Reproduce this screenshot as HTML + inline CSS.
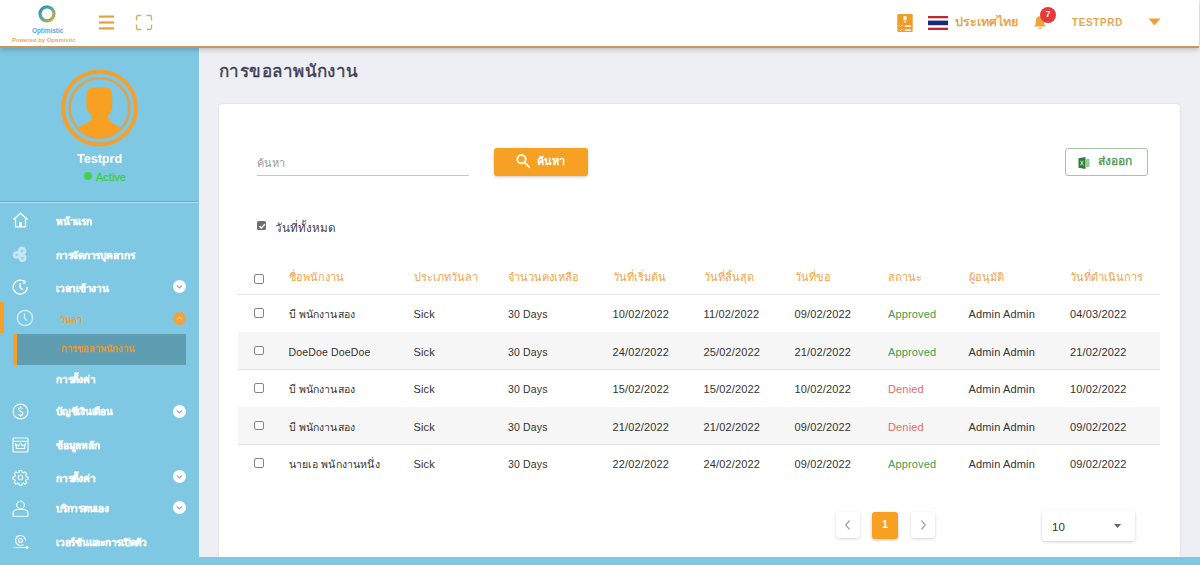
<!DOCTYPE html>
<html><head><meta charset="utf-8">
<style>
*{box-sizing:border-box;margin:0;padding:0}
html,body{width:1200px;height:565px;overflow:hidden}
body{position:relative;background:#eeeff5;font-family:"Liberation Sans",sans-serif;color:#333}
.abs{position:absolute}
#hdr{left:0;top:0;width:1199px;height:47.5px;background:#fff;border-bottom:2px solid #c9955a;box-shadow:0 2px 5px rgba(0,0,0,.2);z-index:5}
#side{left:0;top:47px;width:199px;height:518px;background:#7ec8e3;z-index:3;box-shadow:1px 0 0 #f2f8fb}
#foot{left:0;top:557px;width:1200px;height:8px;background:#7ec8e3;z-index:4}
#card{left:219px;top:104px;width:961px;height:460px;background:#fff;border-radius:4px;box-shadow:0 0 2px rgba(0,0,0,.12)}
.t{position:absolute;white-space:nowrap;line-height:1}
.mi{position:absolute;left:56px;color:#fff;font-weight:bold;font-size:10px;letter-spacing:-0.25px;-webkit-text-stroke:0.2px #fff;white-space:nowrap;line-height:1}
.ic{position:absolute;left:12px}
.chev{position:absolute;left:173px;width:13px;height:13px;border-radius:50%;background:#fff}
.chev svg{position:absolute;left:0;top:0}
.th{position:absolute;top:272px;color:#eea548;font-size:11px;line-height:1;white-space:nowrap}
.row{position:absolute;left:19px;width:922px;height:38px;border-bottom:1px solid #e6e6e6}
.row.g{background:#f5f5f5}
.cb{position:absolute;width:9.5px;height:9.5px;border:1.5px solid #858585;border-radius:2px;background:#fff}
.td{position:absolute;font-size:11px;color:#333;line-height:1;white-space:nowrap;letter-spacing:0.15px}
</style></head>
<body>
<!-- header -->
<div id="hdr" class="abs">
  <svg class="abs" style="left:37px;top:4px" width="20" height="20" viewBox="0 0 20 20">
    <defs><linearGradient id="lg" x1="0" y1="0" x2="1" y2="1"><stop offset="0" stop-color="#2e8fb0"/><stop offset=".45" stop-color="#4fa9a0"/><stop offset="1" stop-color="#e8a33a"/></linearGradient></defs>
    <circle cx="10" cy="9.8" r="7" fill="none" stroke="url(#lg)" stroke-width="3.2"/>
  </svg>
  <div class="t" style="left:32px;top:27.5px;font-size:6.4px;font-weight:bold;color:#52a8da">Optimistic</div>
  <div class="t" style="left:12px;top:37.5px;font-size:5.9px;font-weight:bold;color:#e0ad6c">Powered by Optimistic</div>
  <svg class="abs" style="left:98px;top:15px" width="17" height="15" viewBox="0 0 17 15">
    <rect x="1" y="0.5" width="15" height="2.2" fill="#e8a136"/><rect x="1" y="6.4" width="15" height="2.2" fill="#e8a136"/><rect x="1" y="12.3" width="15" height="2.2" fill="#e8a136"/>
  </svg>
  <svg class="abs" style="left:135px;top:14px" width="18" height="17" viewBox="0 0 18 17" fill="none" stroke="#d8ab62" stroke-width="1.3">
    <path d="M1.5 6.5V3Q1.5 1.5 3 1.5H6.2M11.8 1.5H15Q16.5 1.5 16.5 3V6.5M16.5 10.5V14Q16.5 15.5 15 15.5H11.8M6.2 15.5H3Q1.5 15.5 1.5 14V10.5"/>
  </svg>
  <!-- right -->
  <svg class="abs" style="left:896.5px;top:14px" width="16" height="18" viewBox="0 0 16 18">
    <rect x="0.3" y="0" width="15.4" height="18" rx="1.2" fill="#f09d28"/>
    <rect x="6.3" y="2" width="3.4" height="4.2" rx="1.2" fill="#fff" opacity=".9"/>
    <rect x="6.8" y="6.8" width="2.4" height="1.6" fill="#fff" opacity=".8"/>
    <path d="M2.3 11.6l1.2 1.2 2-2M2.3 15.6l1.2 1.2 2-2" stroke="#fff" stroke-width="1" fill="none" opacity=".75"/>
    <rect x="7.8" y="11.3" width="6.2" height="1.6" fill="#fff" opacity=".85"/><rect x="7.8" y="15.3" width="6.2" height="1.6" fill="#fff" opacity=".85"/>
  </svg>
  <svg class="abs" style="left:927.5px;top:15.5px" width="20" height="14" viewBox="0 0 20 14">
    <rect x="0" y="0" width="20" height="14" fill="#fff"/>
    <rect x="0" y="0" width="20" height="2.3" fill="#bf2631"/><rect x="0" y="11.7" width="20" height="2.3" fill="#bf2631"/>
    <rect x="0" y="4.6" width="20" height="4.6" fill="#1b2a78"/>
  </svg>
  <div class="t" style="left:955px;top:16px;font-size:12.5px;color:#e8a74e;font-weight:bold">ประเทศไทย</div>
  <svg class="abs" style="left:1033px;top:15px" width="14" height="15" viewBox="0 0 14 15">
    <path d="M7 1.2c-2.6 0-4.3 2-4.3 4.6v3.4L1 11.6h12l-1.7-2.4V5.8C11.3 3.2 9.6 1.2 7 1.2z" fill="#eda43a"/>
    <path d="M5.3 12.4a1.7 1.7 0 003.4 0z" fill="#eda43a"/>
  </svg>
  <div class="abs" style="left:1040px;top:7px;width:16px;height:16px;border-radius:50%;background:#e53a37"></div>
  <div class="t" style="left:1040px;top:10px;width:16px;text-align:center;font-size:9px;font-weight:bold;color:#fff">7</div>
  <div class="t" style="left:1072px;top:18px;font-size:10px;font-weight:bold;color:#e8a753;letter-spacing:.6px">TESTPRD</div>
  <svg class="abs" style="left:1148px;top:18px" width="13" height="8" viewBox="0 0 13 8"><path d="M0.5 0.5h12L6.5 7.5z" fill="#eda03a"/></svg>
</div>

<!-- sidebar -->
<div id="side" class="abs">
  <svg class="abs" style="left:58px;top:19px" width="84" height="84" viewBox="0 0 84 84">
    <defs><clipPath id="cp"><circle cx="41.5" cy="42" r="29.5"/></clipPath></defs>
    <circle cx="41.5" cy="42" r="36.5" fill="none" stroke="#f5a02d" stroke-width="4"/>
    <circle cx="41.5" cy="42" r="29.8" fill="none" stroke="#d9a457" stroke-width="2.6"/>
    <g clip-path="url(#cp)" fill="#f7a021">
      <path d="M28.4 29Q28.4 21.3 36 21.3H46.6Q54.2 21.3 54.2 29V41Q54.2 46 50.4 48.5V52Q50.6 56 56 58Q62.5 60.5 64 64V84H19V64Q20.5 60.5 27 58Q33 56 33.4 52V48.5Q28.4 46 28.4 41Z"/>
    </g>
  </svg>
  <div class="t" style="left:0;width:199px;text-align:center;top:106px;font-size:12.6px;font-weight:bold;color:#fff">Testprd</div>
  <div class="abs" style="left:84px;top:125px;width:8px;height:8px;border-radius:50%;background:#3fd84a"></div>
  <div class="t" style="left:96px;top:125px;font-size:11px;color:#3ccf46;-webkit-text-stroke:0.3px #3ccf46">Active</div>
  <div class="abs" style="left:0;top:153.5px;width:199px;height:1.2px;background:#6cadc8"></div>
  <div class="abs" style="left:0;top:155px;width:199px;height:1px;background:#ace0f2"></div>
</div>

<!-- menu -->
<div class="abs" style="left:0;top:302px;width:4px;height:31px;background:#f7a021;z-index:6"></div>
<div class="abs" style="left:13px;top:334px;width:173px;height:31px;background:#5f9db3;z-index:6"></div>
<div class="abs" style="left:13px;top:334px;width:4px;height:31px;background:#f7a021;z-index:6"></div>
<div id="menu" class="abs" style="left:0;top:0;z-index:7">
 <svg class="ic" style="top:212px" width="17" height="16" viewBox="0 0 17 16" fill="none" stroke="#fff" stroke-width="1.25" stroke-linejoin="round">
   <path d="M1.5 7.5L8.5 1.2 15.5 7.5M3.5 6v8.8h10V6"/><rect x="7.2" y="10.2" width="2.6" height="4.6" fill="#fff" stroke="none"/>
 </svg>
 <div class="mi" style="top:217px">หน้าแรก</div>
 <svg class="ic" style="top:246px" width="17" height="17" viewBox="0 0 17 17">
   <g fill="#d2edf7" opacity=".85"><circle cx="10" cy="5" r="4.4"/><circle cx="4.6" cy="9" r="3.8"/><circle cx="10.5" cy="12" r="4"/></g>
   <g fill="#8fcde4"><circle cx="10" cy="5" r="1.3"/><circle cx="4.6" cy="9" r="1.1"/><circle cx="10.5" cy="12" r="1.2"/></g>
 </svg>
 <div class="mi" style="top:251px">การจัดการบุคลากร</div>
 <svg class="ic" style="top:279px" width="17" height="16" viewBox="0 0 17 16" fill="none" stroke="#fff" stroke-width="1.35">
   <path d="M15.2 8A7 7 0 1 1 12.5 2.6"/><path d="M8 4v4.5l3 2.2"/><path d="M12.8 1.5l.2 2.4-2.4.3" stroke-width="1.2"/>
 </svg>
 <div class="mi" style="top:284px">เวลาเข้างาน</div>
 <div class="chev" style="top:280px"><svg width="13" height="13" viewBox="0 0 13 13"><path d="M3.8 5.3l2.7 2.6 2.7-2.6" fill="none" stroke="#a4a09a" stroke-width="1.1"/></svg></div>
 <svg class="abs" style="left:16px;top:309px" width="18" height="18" viewBox="0 0 18 18" fill="none" stroke="#c8ebf7" stroke-width="1.5">
   <circle cx="9" cy="9" r="7.6"/><path d="M8.5 4.2v5l2.6 2.6"/>
 </svg>
 <div class="mi" style="top:315px;left:60px;color:#eda334;font-weight:bold;font-size:9.5px;letter-spacing:-0.1px;-webkit-text-stroke:0">วันลา</div>
 <div class="chev" style="top:312px;background:#f2a23a"><svg width="13" height="13" viewBox="0 0 13 13"><path d="M3.8 7.4l2.7-2.6 2.7 2.6" fill="none" stroke="#f8c77a" stroke-width="1.1"/></svg></div>
 <div class="mi" style="top:344px;left:61px;color:#e29b36;font-weight:bold;font-size:9.5px;letter-spacing:0px;-webkit-text-stroke:0">การขอลาพนักงาน</div>
 <div class="mi" style="top:375px">การตั้งค่า</div>
 <svg class="ic" style="top:403px" width="17" height="17" viewBox="0 0 17 17" fill="none" stroke="#f4fbfd" stroke-width="1.15">
   <circle cx="8.5" cy="8.5" r="7.4"/><path d="M10.6 5.8Q10 4.7 8.5 4.7 6.6 4.7 6.6 6.3c0 2.8 4.2 1.4 4.2 4.3 0 1.4-1.1 1.8-2.3 1.8-1.2 0-2-.6-2.3-1.4M8.5 3.3v1.4M8.5 12.4v1.4"/>
 </svg>
 <div class="mi" style="top:407px">บัญชีเงินเดือน</div>
 <div class="chev" style="top:405px"><svg width="13" height="13" viewBox="0 0 13 13"><path d="M3.8 5.3l2.7 2.6 2.7-2.6" fill="none" stroke="#a4a09a" stroke-width="1.1"/></svg></div>
 <svg class="ic" style="top:437px" width="17" height="16" viewBox="0 0 17 16" fill="none" stroke="#f4fbfd" stroke-width="1.15">
   <rect x="1" y="1" width="15" height="14" rx="1"/><path d="M1 4.2h15M4.5 11.5h8l.8-4.3-2.4 1.8-2.4-2.6-2.4 2.6-2.4-1.8z"/>
 </svg>
 <div class="mi" style="top:441px">ข้อมูลหลัก</div>
 <svg class="ic" style="top:469px" width="17" height="17" viewBox="0 0 24 24" fill="none" stroke="#f4fbfd" stroke-width="1.55">
   <circle cx="12" cy="12" r="3.2"/>
   <path d="M10.3 2.2h3.4l.5 2.6 1.9.8 2.2-1.5 2.4 2.4-1.5 2.2.8 1.9 2.6.5v3.4l-2.6.5-.8 1.9 1.5 2.2-2.4 2.4-2.2-1.5-1.9.8-.5 2.6h-3.4l-.5-2.6-1.9-.8-2.2 1.5-2.4-2.4 1.5-2.2-.8-1.9-2.6-.5v-3.4l2.6-.5.8-1.9-1.5-2.2 2.4-2.4 2.2 1.5 1.9-.8z"/>
 </svg>
 <div class="mi" style="top:474px">การตั้งค่า</div>
 <div class="chev" style="top:470px"><svg width="13" height="13" viewBox="0 0 13 13"><path d="M3.8 5.3l2.7 2.6 2.7-2.6" fill="none" stroke="#a4a09a" stroke-width="1.1"/></svg></div>
 <svg class="ic" style="top:500px" width="17" height="17" viewBox="0 0 17 17" fill="none" stroke="#f4fbfd" stroke-width="1.15">
   <circle cx="8.5" cy="5" r="3.8"/><path d="M1 16.2v-2.5c0-2.5 2-4.2 4.5-4.2h6c2.5 0 4.5 1.7 4.5 4.2v2.5z"/>
 </svg>
 <div class="mi" style="top:504px">บริการตนเอง</div>
 <div class="chev" style="top:501px"><svg width="13" height="13" viewBox="0 0 13 13"><path d="M3.8 5.3l2.7 2.6 2.7-2.6" fill="none" stroke="#a4a09a" stroke-width="1.1"/></svg></div>
 <svg class="ic" style="top:534px" width="17" height="15" viewBox="0 0 17 15" fill="none" stroke="#f4fbfd" stroke-width="1.15">
   <circle cx="8.5" cy="6.5" r="2"/><path d="M13.5 6.5a5 5 0 1 0-2 4M4 2l1 1.3M1.5 13.5h13.5" /><circle cx="15" cy="13.5" r=".9" fill="#fff"/>
 </svg>
 <div class="mi" style="top:538px">เวอร์ชันและการเปิดตัว</div>
</div>
<div id="foot" class="abs"></div>

<!-- main -->
<div class="t" style="left:219px;top:63px;font-size:17px;letter-spacing:0.45px;color:#3b3d52;-webkit-text-stroke:0.4px #3b3d52">การขอลาพนักงาน</div>
<div id="card" class="abs"></div>
<div class="t" style="left:257px;top:158px;font-size:11px;color:#9c9c9c">ค้นหา</div>
<div class="abs" style="left:257px;top:175px;width:212px;height:1px;background:#c6c6c6"></div>
<div class="abs" style="left:494px;top:147.5px;width:94px;height:28px;background:#f6a024;border-radius:3px;box-shadow:0 1px 3px rgba(0,0,0,.22)"></div>
<svg class="abs" style="left:515px;top:153px" width="17" height="16" viewBox="0 0 17 16" fill="none" stroke="#fffbe8" stroke-width="1.9">
  <circle cx="6.5" cy="6.2" r="4.2"/><path d="M9.5 9.3l4.8 4.9" stroke-linecap="round"/>
</svg>
<div class="t" style="left:537px;top:156px;font-size:11px;font-weight:bold;color:#fff">ค้นหา</div>
<div class="abs" style="left:1065px;top:147.5px;width:83px;height:28px;border:1px solid #a3c5a3;border-radius:3px"></div>
<svg class="abs" style="left:1078px;top:157px" width="13" height="12" viewBox="0 0 13 12">
  <path d="M0.5 1.2L7.5 0v12L0.5 10.8z" fill="#2e7d32"/><rect x="7.5" y="2" width="4" height="8" fill="#9cc89e"/>
  <path d="M2.4 3.6l3 4.8M5.4 3.6l-3 4.8" stroke="#c8e6c9" stroke-width="1"/>
</svg>
<div class="t" style="left:1098px;top:155px;font-size:12px;font-weight:bold;color:#5c9f5e">ส่งออก</div>
<div class="abs" style="left:257px;top:221px;width:9px;height:9px;background:#707070;border-radius:1.5px"></div>
<svg class="abs" style="left:256.5px;top:220.5px" width="10" height="10" viewBox="0 0 10 10"><path d="M2.4 5.2l1.9 1.9 3.6-3.8" fill="none" stroke="#fff" stroke-width="1.4"/></svg>
<div class="t" style="left:275px;top:221.5px;font-size:11.7px;color:#454545">วันที่ทั้งหมด</div>
<div class="cb" style="left:254px;top:274px"></div>
<div class="th" style="left:288.5px">ชื่อพนักงาน</div>
<div class="th" style="left:413.5px">ประเภทวันลา</div>
<div class="th" style="left:508px">จำนวนคงเหลือ</div>
<div class="th" style="left:612.5px">วันที่เริ่มต้น</div>
<div class="th" style="left:703.5px">วันที่สิ้นสุด</div>
<div class="th" style="left:794.5px">วันที่ขอ</div>
<div class="th" style="left:888px">สถานะ</div>
<div class="th" style="left:968.5px">ผู้อนุมัติ</div>
<div class="th" style="left:1070px">วันที่ดำเนินการ</div>
<div class="abs" style="left:238px;top:293.5px;width:922px;height:1px;background:#e4e4e4"></div>
<div class="abs" style="left:238px;top:331.5px;width:922px;height:1px;background:#e4e4e4"></div>
<div class="cb" style="left:254px;top:308.25px"></div>
<div class="td" style="left:288.5px;top:309.25px;font-size:10.5px;">บี พนักงานสอง</div>
<div class="td" style="left:413.5px;top:309.25px;">Sick</div>
<div class="td" style="left:508px;top:309.25px;font-size:10.5px;">30 Days</div>
<div class="td" style="left:612.5px;top:309.25px;">10/02/2022</div>
<div class="td" style="left:703.5px;top:309.25px;">11/02/2022</div>
<div class="td" style="left:794.5px;top:309.25px;">09/02/2022</div>
<div class="td" style="left:888px;top:309.25px;color:#419d4b;">Approved</div>
<div class="td" style="left:968.5px;top:309.25px;">Admin Admin</div>
<div class="td" style="left:1070px;top:309.25px;">04/03/2022</div>
<div class="abs" style="left:238px;top:332.0px;width:922px;height:37.5px;background:#f6f6f6"></div>
<div class="abs" style="left:238px;top:369.0px;width:922px;height:1px;background:#e4e4e4"></div>
<div class="cb" style="left:254px;top:345.75px"></div>
<div class="td" style="left:288.5px;top:346.75px;font-size:10.5px;">DoeDoe DoeDoe</div>
<div class="td" style="left:413.5px;top:346.75px;">Sick</div>
<div class="td" style="left:508px;top:346.75px;font-size:10.5px;">30 Days</div>
<div class="td" style="left:612.5px;top:346.75px;">24/02/2022</div>
<div class="td" style="left:703.5px;top:346.75px;">25/02/2022</div>
<div class="td" style="left:794.5px;top:346.75px;">21/02/2022</div>
<div class="td" style="left:888px;top:346.75px;color:#419d4b;">Approved</div>
<div class="td" style="left:968.5px;top:346.75px;">Admin Admin</div>
<div class="td" style="left:1070px;top:346.75px;">21/02/2022</div>
<div class="abs" style="left:238px;top:406.5px;width:922px;height:1px;background:#e4e4e4"></div>
<div class="cb" style="left:254px;top:383.25px"></div>
<div class="td" style="left:288.5px;top:384.25px;font-size:10.5px;">บี พนักงานสอง</div>
<div class="td" style="left:413.5px;top:384.25px;">Sick</div>
<div class="td" style="left:508px;top:384.25px;font-size:10.5px;">30 Days</div>
<div class="td" style="left:612.5px;top:384.25px;">15/02/2022</div>
<div class="td" style="left:703.5px;top:384.25px;">15/02/2022</div>
<div class="td" style="left:794.5px;top:384.25px;">10/02/2022</div>
<div class="td" style="left:888px;top:384.25px;color:#e36b6b;">Denied</div>
<div class="td" style="left:968.5px;top:384.25px;">Admin Admin</div>
<div class="td" style="left:1070px;top:384.25px;">10/02/2022</div>
<div class="abs" style="left:238px;top:407.0px;width:922px;height:37.5px;background:#f6f6f6"></div>
<div class="abs" style="left:238px;top:444.0px;width:922px;height:1px;background:#e4e4e4"></div>
<div class="cb" style="left:254px;top:420.75px"></div>
<div class="td" style="left:288.5px;top:421.75px;font-size:10.5px;">บี พนักงานสอง</div>
<div class="td" style="left:413.5px;top:421.75px;">Sick</div>
<div class="td" style="left:508px;top:421.75px;font-size:10.5px;">30 Days</div>
<div class="td" style="left:612.5px;top:421.75px;">21/02/2022</div>
<div class="td" style="left:703.5px;top:421.75px;">21/02/2022</div>
<div class="td" style="left:794.5px;top:421.75px;">09/02/2022</div>
<div class="td" style="left:888px;top:421.75px;color:#e36b6b;">Denied</div>
<div class="td" style="left:968.5px;top:421.75px;">Admin Admin</div>
<div class="td" style="left:1070px;top:421.75px;">09/02/2022</div>
<div class="cb" style="left:254px;top:458.25px"></div>
<div class="td" style="left:288.5px;top:459.25px;font-size:10.5px;">นายเอ พนักงานหนึ่ง</div>
<div class="td" style="left:413.5px;top:459.25px;">Sick</div>
<div class="td" style="left:508px;top:459.25px;font-size:10.5px;">30 Days</div>
<div class="td" style="left:612.5px;top:459.25px;">22/02/2022</div>
<div class="td" style="left:703.5px;top:459.25px;">24/02/2022</div>
<div class="td" style="left:794.5px;top:459.25px;">09/02/2022</div>
<div class="td" style="left:888px;top:459.25px;color:#419d4b;">Approved</div>
<div class="td" style="left:968.5px;top:459.25px;">Admin Admin</div>
<div class="td" style="left:1070px;top:459.25px;">09/02/2022</div>
<div class="abs" style="left:836px;top:512px;width:24px;height:26px;background:#fff;border-radius:3px;box-shadow:0 1px 3px rgba(0,0,0,.18)"></div>
<svg class="abs" style="left:843px;top:519px" width="10" height="12" viewBox="0 0 10 12"><path d="M6.5 1.5L2.8 6l3.7 4.5" fill="none" stroke="#a0a0a0" stroke-width="1.2"/></svg>
<div class="abs" style="left:872px;top:511.5px;width:26px;height:27px;background:#f7a021;border-radius:3px;box-shadow:0 1px 3px rgba(0,0,0,.25)"></div>
<div class="t" style="left:872px;top:519px;width:26px;text-align:center;font-size:11px;font-weight:bold;color:#fff">1</div>
<div class="abs" style="left:911px;top:512px;width:24px;height:26px;background:#fff;border-radius:3px;box-shadow:0 1px 3px rgba(0,0,0,.18)"></div>
<svg class="abs" style="left:918px;top:519px" width="10" height="12" viewBox="0 0 10 12"><path d="M3.5 1.5L7.2 6l-3.7 4.5" fill="none" stroke="#a0a0a0" stroke-width="1.2"/></svg>
<div class="abs" style="left:1042px;top:511px;width:93px;height:30px;background:#fff;border-radius:3px;box-shadow:0 1px 3px rgba(0,0,0,.2)"></div>
<div class="t" style="left:1052px;top:521.5px;font-size:11.5px;color:#333">10</div>
<svg class="abs" style="left:1113.5px;top:523.5px" width="7" height="4" viewBox="0 0 7 4"><path d="M0 0h7L3.5 4z" fill="#666"/></svg>

</body></html>
